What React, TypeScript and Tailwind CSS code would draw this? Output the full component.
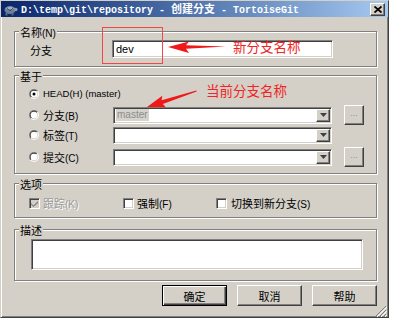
import React from "react";

const CJK = "font-['Noto_Sans_CJK_SC',sans-serif]";
const LAT = "font-['Liberation_Sans',Arial,sans-serif]";
const SUNKEN =
  "border border-t-[#808080] border-l-[#808080] border-r-white border-b-white shadow-[inset_1px_1px_0_#404040,inset_-1px_-1px_0_#d4d0c8]";
const RAISED =
  "border border-t-white border-l-white border-r-[#404040] border-b-[#404040] shadow-[inset_-1px_-1px_0_#808080,inset_1px_1px_0_#d4d0c8] bg-[#d4d0c8]";
const GROUP =
  "relative border border-[#808080] shadow-[inset_1px_1px_0_#fff,1px_1px_0_#fff]";

function L({ cn, en, cls = "" }: { cn: string; en?: string; cls?: string }) {
  return (
    <span className={`whitespace-nowrap leading-[13px] ${cls}`}>
      <span className={`${CJK} text-[11px]`}>{cn}</span>
      {en && <span className={`${LAT} text-[10px]`}>{en}</span>}
    </span>
  );
}

function Legend({ cn, en }: { cn: string; en?: string }) {
  return (
    <div className="absolute left-[4px] -top-[7px] px-[1px] bg-[#d4d0c8] leading-[13px] text-black">
      <L cn={cn} en={en} />
    </div>
  );
}

function Radio({ checked }: { checked?: boolean }) {
  return (
    <svg width="10" height="10" viewBox="0 0 12 12" className="shrink-0">
      <defs>
        <linearGradient id="ra" x1="0" y1="0" x2="1" y2="1">
          <stop offset="0.5" stopColor="#808080" />
          <stop offset="0.5" stopColor="#ffffff" />
        </linearGradient>
        <linearGradient id="rb" x1="0" y1="0" x2="1" y2="1">
          <stop offset="0.5" stopColor="#404040" />
          <stop offset="0.5" stopColor="#d4d0c8" />
        </linearGradient>
      </defs>
      <circle cx="6" cy="6" r="6" fill="url(#ra)" />
      <circle cx="6" cy="6" r="5" fill="url(#rb)" />
      <circle cx="6" cy="6" r="4" fill="#ffffff" />
      {checked && <circle cx="6" cy="6" r="1.8" fill="#000" />}
    </svg>
  );
}

function Check({ checked, disabled }: { checked?: boolean; disabled?: boolean }) {
  return (
    <div
      className={`w-[11px] h-[11px] shrink-0 ${SUNKEN} ${disabled ? "bg-[#d4d0c8]" : "bg-white"} flex items-center justify-center`}
    >
      {checked && (
        <svg width="7" height="7" viewBox="0 0 7 7">
          <path d="M0 3 L2.5 5.5 L7 1 L7 3 L2.5 7 L0 4.5 Z" fill={disabled ? "#808080" : "#000"} />
        </svg>
      )}
    </div>
  );
}

function Combo({ children }: { children?: React.ReactNode }) {
  return (
    <div className={`w-[219px] h-[17px] bg-white ${SUNKEN} flex items-stretch p-[1px]`}>
      <div className="flex-1 flex items-center pl-[1px] overflow-hidden">{children}</div>
      <div className={`w-[14px] ${RAISED} flex items-center justify-center`}>
        <svg width="7" height="4" viewBox="0 0 7 4">
          <path d="M0 0 H7 L3.5 4 Z" fill="#404040" />
        </svg>
      </div>
    </div>
  );
}

function Dots() {
  return (
    <div
      className={`ml-[12px] w-[20px] h-[20px] ${RAISED} flex items-center justify-center ${LAT} text-[9px] text-[#909090] leading-none pb-[3px]`}
    >
      ...
    </div>
  );
}

function Button({ text, def }: { text: string; def?: boolean }) {
  const cls = def
    ? "border border-black shadow-[inset_1px_1px_0_#fff,inset_-1px_-1px_0_#404040,inset_-2px_-2px_0_#808080] bg-[#d4d0c8]"
    : RAISED;
  return (
    <div className={`w-[65px] h-[21px] ${cls} flex items-center justify-center text-black`}>
      <L cn={text} />
    </div>
  );
}

export default function App() {
  return (
    <div className="relative w-[396px] h-[328px] bg-white overflow-hidden">
      <div className="w-[389px] h-[318px] bg-[#d4d0c8] border border-t-[#d4d0c8] border-l-[#d4d0c8] border-r-[#404040] border-b-[#404040] shadow-[inset_1px_1px_0_#fff,inset_-1px_-1px_0_#808080] flex flex-col">
        {/* Title bar */}
        <div className="h-[16px] bg-linear-to-r from-[#0a246a] to-[#a6caf0] flex items-center pl-[2px] pr-[3px]">
          <svg width="15" height="13" viewBox="0 0 15 13" className="shrink-0">
            <ellipse cx="7" cy="7" rx="5.5" ry="4" fill="#6b7f9a" />
            <path d="M2.5 6 Q7 1.5 11.5 6" fill="#9fb0c8" />
            <circle cx="12.8" cy="6.5" r="1.8" fill="#8a9ab0" />
            <rect x="2.5" y="10" width="2" height="2.5" fill="#5a6a80" />
            <rect x="8.5" y="10" width="2" height="2.5" fill="#5a6a80" />
            <path d="M4 5 L7 8 L10 5" stroke="#3d4c63" strokeWidth="0.8" fill="none" />
          </svg>
          <div className="ml-[3px] text-white font-bold whitespace-nowrap font-['Liberation_Mono',monospace] text-[10px] leading-none">
            D:\temp\git\repository -{" "}
            <span className={`${CJK} text-[11px] font-bold`}>创建分支</span> - TortoiseGit
          </div>
          <div className={`ml-auto w-[15px] h-[13px] ${RAISED} flex items-center justify-center`}>
            <svg width="8" height="7" viewBox="0 0 8 7">
              <path d="M0.5 0.5 L7.5 6.5 M7.5 0.5 L0.5 6.5" stroke="#000" strokeWidth="1.8" />
            </svg>
          </div>
        </div>

        {/* Content */}
        <div className="flex flex-col pl-[13px] pr-[11px]">
          {/* 名称 */}
          <div className={`${GROUP} mt-[14px] h-[36px] flex items-center pl-[15px]`}>
            <Legend cn="名称" en="(N)" />
            <div className="w-[82px] text-black">
              <L cn="分支" />
            </div>
            <div className={`w-[221px] h-[18px] bg-white ${SUNKEN} flex items-center pl-[3px] ${LAT} text-[11px] text-black leading-none`}>
              dev
            </div>
          </div>

          {/* 基于 */}
          <div className={`${GROUP} mt-[8px] h-[99px] flex flex-col pt-[10px] pl-[14px]`}>
            <Legend cn="基于" />
            <div className="h-[16px] flex items-center">
              <Radio checked />
              <span className={`ml-[4px] ${LAT} text-[9.5px] leading-none text-black`}>HEAD(H) (master)</span>
            </div>
            <div className="mt-[3px] h-[20px] flex items-center">
              <div className="w-[84px] flex items-center">
                <Radio />
                <L cn="分支" en="(B)" cls="ml-[4px] text-black" />
              </div>
              <Combo>
                <span className={`${LAT} text-[10px] leading-[12px] text-[#8c8c8c] bg-[#d6d3cd] px-[1px]`}>master</span>
              </Combo>
              <Dots />
            </div>
            <div className="h-[20px] flex items-center">
              <div className="w-[84px] flex items-center">
                <Radio />
                <L cn="标签" en="(T)" cls="ml-[4px] text-black" />
              </div>
              <Combo />
            </div>
            <div className="mt-[2px] h-[20px] flex items-center">
              <div className="w-[84px] flex items-center">
                <Radio />
                <L cn="提交" en="(C)" cls="ml-[4px] text-black" />
              </div>
              <Combo />
              <Dots />
            </div>
          </div>

          {/* 选项 */}
          <div className={`${GROUP} mt-[9px] h-[35px] flex items-center pt-[6px] pl-[14px]`}>
            <Legend cn="选项" />
            <div className="w-[94px] flex items-center">
              <Check checked disabled />
              <L cn="跟踪" en="(K)" cls="ml-[3px] text-[#9a9a9a] [text-shadow:1px_1px_0_#fff]" />
            </div>
            <div className="w-[93px] flex items-center">
              <Check />
              <L cn="强制" en="(F)" cls="ml-[3px] text-black" />
            </div>
            <div className="flex items-center">
              <Check />
              <L cn="切换到新分支" en="(S)" cls="ml-[4px] text-black" />
            </div>
          </div>

          {/* 描述 */}
          <div className={`${GROUP} mt-[11px] h-[52px] pt-[9px] pl-[16px]`}>
            <Legend cn="描述" />
            <div className={`w-[332px] h-[31px] bg-white ${SUNKEN}`} />
          </div>

          {/* Buttons */}
          <div className="mt-[4px] flex justify-end gap-[10px]">
            <Button text="确定" def />
            <Button text="取消" />
            <Button text="帮助" />
          </div>
        </div>
      </div>

      {/* size grip */}
      <svg className="absolute left-[375px] top-[305px]" width="12" height="12" viewBox="0 0 12 12">
        <path d="M11 1 L1 11 M11 5 L5 11 M11 9 L9 11" stroke="#808080" strokeWidth="1" />
        <path d="M12 2 L2 12 M12 6 L6 12 M12 10 L10 12" stroke="#ffffff" strokeWidth="1" />
      </svg>

      {/* annotations */}
      <div className="absolute left-[102px] top-[27px] w-[61px] h-[37px] border border-[#f04848]" />
      <svg className="absolute left-0 top-0 pointer-events-none" width="396" height="328" viewBox="0 0 396 328">
        <polygon points="168,47 189,41.5 186,45.3 226,46.6 186,48.8 189,53" fill="#f01818" />
        <polygon
          points="147,107 165.9,107.2 162.8,104 196.7,91.6 196.3,90.6 161.6,100.2 162.3,95.8"
          fill="#f01818"
        />
      </svg>
      <div className={`absolute left-[233px] top-[38px] ${CJK} text-[13.5px] leading-[16px] text-[#f02424] whitespace-nowrap`}>
        新分支名称
      </div>
      <div className={`absolute left-[206px] top-[82px] ${CJK} text-[13.5px] leading-[16px] text-[#f02424] whitespace-nowrap`}>
        当前分支名称
      </div>
    </div>
  );
}
